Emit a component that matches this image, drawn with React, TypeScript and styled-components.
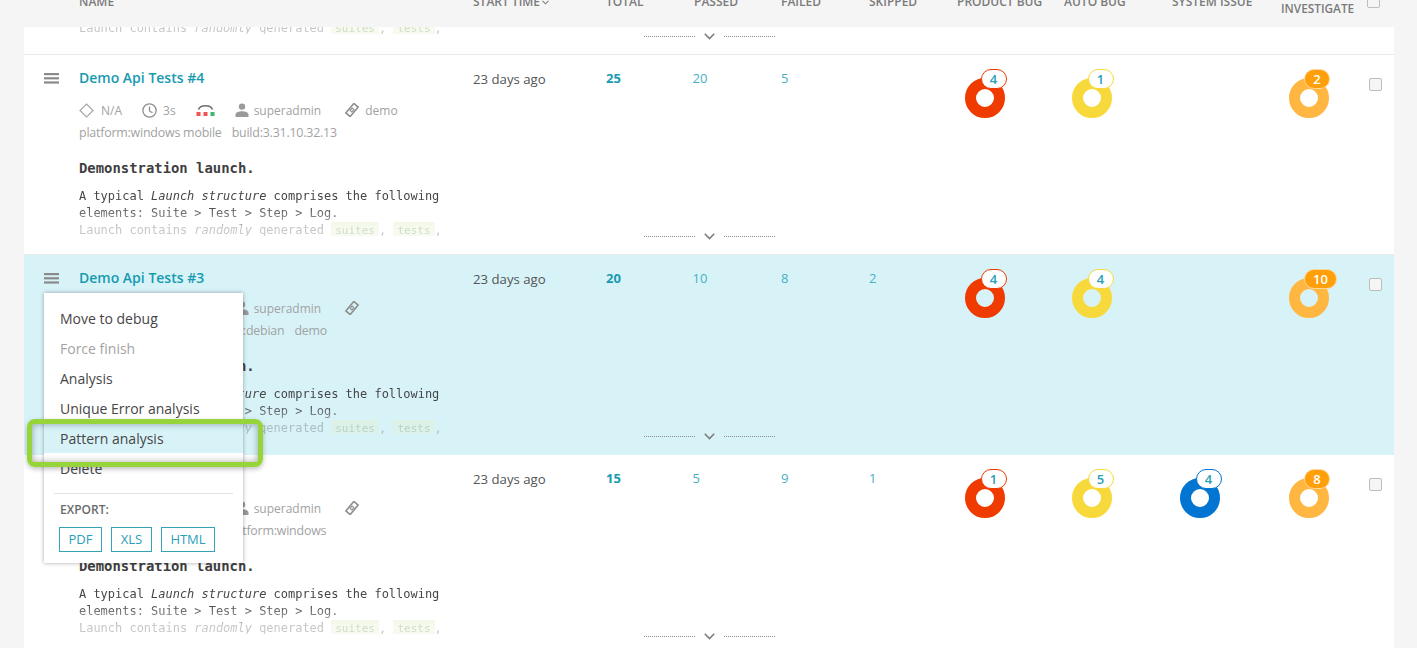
import React from 'react';
import styled, { createGlobalStyle } from 'styled-components';

const GlobalStyle = createGlobalStyle`
  html, body {
    margin: 0;
    padding: 0;
    height: 648px;
    overflow: hidden;
    background: #f5f5f5;
    font-family: "Open Sans", "Liberation Sans", sans-serif;
  }
`;

const columns = '55px 394px 133px 88px 87px 88px 88px 107px 108px 109px 88px 1fr';
const mono = '"DejaVu Sans Mono", "Liberation Mono", monospace';

const Page = styled.div`
  width: 1370px;
  height: 648px;
  margin-left: 24px;
  overflow: hidden;
`;

const Header = styled.div`
  display: grid;
  grid-template-columns: ${columns};
  height: 27px;
  overflow: hidden;
  background: #f5f5f5;
`;

const HeadCell = styled.div<{ $start?: number }>`
  grid-column-start: ${props => props.$start ?? 'auto'};
  margin-top: -6px;
  font-size: 12px;
  line-height: 16px;
  font-weight: 600;
  color: #7b7b7b;
  text-transform: uppercase;
  white-space: nowrap;
  display: flex;
  align-items: center;
  align-self: start;
  gap: 2px;
`;

const HeadTwoLine = styled(HeadCell)`
  display: block;
  margin-top: -11px;
  font-size: 11.8px;
  line-height: 13px;
  text-align: center;
  width: 73px;
`;

const HeadCheck = styled.div`
  margin: -5px 0 0 -2px;
  width: 13px;
  height: 13px;
  box-sizing: border-box;
  border: 1.5px solid #bdbdbd;
  border-radius: 2px;
  background: #f5f5f5;
`;

const TailRow = styled.div`
  display: grid;
  height: 27px;
  background: #fff;
  border-bottom: 1px solid #e9e9e9;
  overflow: hidden;
`;

const TailText = styled.div`
  grid-area: 1 / 1;
  height: 7px;
  overflow: hidden;
  padding-left: 55px;
  opacity: 0.3;
  font-family: ${mono};
  font-size: 11.97px;
  line-height: 17px;
  color: #464547;
  white-space: pre;

  & > div {
    margin-top: -7px;
  }
`;

const TailExpand = styled.div`
  grid-area: 1 / 1;
  align-self: start;
  margin-top: 1px;
`;

const Row = styled.div<{ $active?: boolean }>`
  position: relative;
  z-index: ${props => (props.$active ? 2 : 1)};
  height: 199px;
  display: flex;
  flex-direction: column;
  background: ${props => (props.$active ? '#d8f3f8' : '#fff')};
  border-bottom: 1px solid ${props => (props.$active ? '#d8f3f8' : '#e9e9e9')};
`;

const Cells = styled.div`
  display: grid;
  grid-template-columns: ${columns};
  height: 173px;
`;

const MenuCell = styled.div`
  display: flex;
  align-items: flex-start;
  padding: 18px 0 0 20px;
`;

const NameCell = styled.div`
  padding-top: 13px;
  min-width: 0;
`;

const Title = styled.div`
  font-size: 14px;
  line-height: 20px;
  font-weight: 600;
  color: #179ab0;
  white-space: nowrap;
`;

const Meta = styled.div<{ $tall?: boolean }>`
  display: flex;
  align-items: center;
  height: 20px;
  margin-top: ${props => (props.$tall ? 12 : 10)}px;
  font-size: 12px;
  color: #a2a2a2;
  white-space: nowrap;
`;

const MetaLabel = styled.span<{ $gap: number; $after?: number }>`
  margin-left: ${props => props.$gap}px;
  margin-right: ${props => props.$after ?? 0}px;
`;

const IconSlot = styled.span<{ $after?: number }>`
  display: flex;
  margin-right: ${props => props.$after ?? 0}px;
`;

const Attributes = styled.div`
  display: flex;
  gap: 10px;
  height: 20px;
  margin-top: 3px;
  font-size: 12.4px;
  line-height: 20px;
  letter-spacing: -0.2px;
  color: #a2a2a2;
  white-space: nowrap;
`;

const Heading = styled.div`
  margin-top: 15px;
  font-family: ${mono};
  font-size: 13.9px;
  line-height: 20px;
  font-weight: 700;
  color: #3f3f3f;
`;

const Description = styled.div`
  margin-top: 10px;
  height: 48px;
  overflow: hidden;
  font-family: ${mono};
  font-size: 11.97px;
  line-height: 17px;
  color: #464547;
  white-space: pre;
  -webkit-mask-image: linear-gradient(to bottom, #000 0, #000 18px, rgba(0, 0, 0, 0.3) 40px, rgba(0, 0, 0, 0.3) 48px);
  mask-image: linear-gradient(to bottom, #000 0, #000 18px, rgba(0, 0, 0, 0.3) 40px, rgba(0, 0, 0, 0.3) 48px);
`;

const Chip = styled.span`
  display: inline-block;
  padding: 0 4px;
  font-size: 11px;
  line-height: 17px;
  background: #e4f0cc;
  border-radius: 2px;
  color: #5f8f3f;
`;

const DateCell = styled.div`
  padding-top: 14px;
  font-size: 13.2px;
  line-height: 20px;
  color: #555;
`;

const Count = styled.div<{ $strong?: boolean; $nudge?: number }>`
  margin-left: ${props => props.$nudge ?? 0}px;
  padding-top: 13px;
  font-size: 13px;
  line-height: 20px;
  font-weight: ${props => (props.$strong ? 700 : 400)};
  color: ${props => (props.$strong ? '#179ab0' : '#46b0c4')};
`;

const DefectCell = styled.div`
  padding: 23px 0 0 7.5px;
`;

const Donut = styled.div<{ $color: string }>`
  position: relative;
  box-sizing: border-box;
  width: 40px;
  height: 40px;
  border: 11.5px solid ${props => props.$color};
  border-radius: 50%;
`;

const Badge = styled.span<{ $color: string; $solid?: boolean; $wide?: boolean }>`
  position: absolute;
  top: -20.5px;
  left: ${props => (props.$solid ? '4.5px' : '5px')};
  box-sizing: border-box;
  min-width: ${props => (props.$wide ? '33px' : '26px')};
  height: 20px;
  border-radius: 10px;
  text-align: center;
  font-size: 13px;
  line-height: 18px;
  font-weight: 600;
  border: 1px solid ${props => (props.$solid ? '#ffd79c' : props.$color)};
  background: ${props => (props.$solid ? '#ff9f0a' : '#fff')};
  color: ${props => (props.$solid ? '#fff' : '#2a9fb8')};
`;

const RowCheck = styled.div`
  margin-top: 23px;
  width: 13px;
  height: 13px;
  box-sizing: border-box;
  border: 1.5px solid #bdbdbd;
  border-radius: 2px;
  background: #f5f5f5;
`;

const Expand = styled.div`
  display: flex;
  align-items: center;
  justify-content: center;
  gap: 9px;
  height: 16px;
`;

const Dots = styled.span`
  width: 51px;
  border-top: 1px dotted #8d8d8d;
`;

const Menu = styled.div`
  position: absolute;
  top: 38px;
  left: 20px;
  z-index: 3;
  box-sizing: border-box;
  width: 199px;
  height: 270px;
  padding-top: 10px;
  background: #fff;
  box-shadow: 0 0 4px rgba(0, 0, 0, 0.35);
`;

const MenuItem = styled.div<{ $disabled?: boolean; $active?: boolean }>`
  height: 30px;
  padding-left: 16px;
  font-size: 14px;
  line-height: 31px;
  color: ${props => (props.$disabled ? '#a3a3a3' : '#464547')};
  background: ${props => (props.$active ? '#d8f3f8' : 'transparent')};
`;

const MenuDivider = styled.div`
  height: 1px;
  margin: 10px 10px 0;
  background: #e3e3e3;
`;

const ExportLabel = styled.div`
  margin: 9px 0 0 16px;
  font-size: 12px;
  line-height: 14px;
  font-weight: 600;
  color: #6a6a6a;
`;

const ExportButtons = styled.div`
  display: flex;
  gap: 9px;
  margin: 10px 0 0 15px;
`;

const ExportButton = styled.div<{ $width: number }>`
  box-sizing: border-box;
  width: ${props => props.$width}px;
  height: 25px;
  border: 1px solid #36a3b8;
  font-size: 13px;
  line-height: 23px;
  text-align: center;
  color: #2aa0b8;
`;

const Callout = styled.div`
  position: absolute;
  top: 126px;
  left: -17px;
  box-sizing: border-box;
  width: 236px;
  height: 48px;
  border: 5px solid #97d43a;
  border-radius: 8px;
  box-shadow: 0 2px 5px rgba(0, 0, 0, 0.25), inset 0 0 7px rgba(0, 0, 0, 0.35);
`;

const MenuIcon = () => (
  <svg width="15" height="11" viewBox="0 0 15 11" fill="#8a8a8a">
    <rect y="0" width="15" height="2.2" />
    <rect y="4.2" width="15" height="2.2" />
    <rect y="8.4" width="15" height="2.2" />
  </svg>
);

const DiamondIcon = () => (
  <svg width="15" height="15" viewBox="0 0 15 15" fill="none" stroke="#a8a8a8" strokeWidth="1.2">
    <path d="M7.5 1 14 7.5 7.5 14 1 7.5Z" />
  </svg>
);

const ClockIcon = () => (
  <svg width="15" height="15" viewBox="0 0 15 15" fill="none" stroke="#8f8f8f" strokeWidth="1.3">
    <circle cx="7.5" cy="7.5" r="6.6" />
    <path d="M7.5 3.6V8l3 1.8" />
  </svg>
);

const StatusIcon = () => (
  <svg width="19" height="14" viewBox="0 0 19 14">
    <path d="M2.5 6.5C4.5 1.5 14.5 1.5 16.5 6.5" fill="none" stroke="#6f6f6f" strokeWidth="1.7" />
    <rect x="0.5" y="9" width="4" height="4" fill="#f25252" />
    <rect x="7.5" y="9" width="4" height="4" fill="#f25252" />
    <rect x="14.5" y="9" width="4" height="4" fill="#3fb56f" />
  </svg>
);

const PersonIcon = () => (
  <svg width="14" height="14" viewBox="0 0 14 14" fill="#9a9a9a">
    <circle cx="7" cy="3.6" r="3.2" />
    <path d="M0.5 14V11.6C0.5 9.4 4 8.2 7 8.2s6.5 1.2 6.5 3.4V14Z" />
  </svg>
);

const TagIcon = () => (
  <svg width="14" height="14" viewBox="0 0 14 14" fill="none" stroke="#8c8c8c">
    <g transform="rotate(-50 7 7)">
      <rect x="0.8" y="4.2" width="12.4" height="5.6" strokeWidth="1.6" />
      <rect x="5.4" y="5.9" width="3.2" height="2.2" strokeWidth="1" />
    </g>
  </svg>
);

const ChevronIcon = ({ size = 11 }: { size?: number }) => (
  <svg width={size} height={Math.round(size * 0.65)} viewBox="0 0 11 7" fill="none" stroke="#7d7d7d" strokeWidth="1.6">
    <path d="M0.8 0.8 5.5 5.5 10.2 0.8" />
  </svg>
);

const Expander = () => (
  <Expand>
    <Dots />
    <ChevronIcon />
    <Dots />
  </Expand>
);

const Descr = () => (
  <>
    {'A typical '}
    <i>Launch structure</i>
    {' comprises the following\nelements: Suite > Test > Step > Log.\nLaunch contains '}
    <i>randomly</i>
    {' generated '}
    <Chip>suites</Chip>
    {', '}
    <Chip>tests</Chip>
    {','}
  </>
);

interface Defect {
  value: number;
  color: string;
  solid?: boolean;
}

interface LaunchRow {
  title: string;
  total: number;
  passed: number;
  failed: number;
  skipped?: number;
  tagInline?: boolean;
  attributes: string[];
  defects: (Defect | null)[];
}

const RED = '#ef3a00';
const YELLOW = '#f8d93b';
const BLUE = '#0274d1';
const ORANGE = '#ffb742';

const rows: LaunchRow[] = [
  {
    title: 'Demo Api Tests #4',
    total: 25,
    passed: 20,
    failed: 5,
    tagInline: true,
    attributes: ['platform:windows mobile', 'build:3.31.10.32.13'],
    defects: [
      { value: 4, color: RED },
      { value: 1, color: YELLOW },
      null,
      { value: 2, color: ORANGE, solid: true },
    ],
  },
  {
    title: 'Demo Api Tests #3',
    total: 20,
    passed: 10,
    failed: 8,
    skipped: 2,
    attributes: ['build:3.31.10.32.13', 'platform:debian', 'demo'],
    defects: [
      { value: 4, color: RED },
      { value: 4, color: YELLOW },
      null,
      { value: 10, color: ORANGE, solid: true },
    ],
  },
  {
    title: 'Demo Api Tests #2',
    total: 15,
    passed: 5,
    failed: 9,
    skipped: 1,
    attributes: ['test', 'build:3.31.10.32.13', 'platform:windows'],
    defects: [
      { value: 1, color: RED },
      { value: 5, color: YELLOW },
      { value: 4, color: BLUE },
      { value: 8, color: ORANGE, solid: true },
    ],
  },
];

const menuItems = ['Move to debug', 'Force finish', 'Analysis', 'Unique Error analysis', 'Pattern analysis', 'Delete'];
const exportFormats = [
  { label: 'PDF', width: 43 },
  { label: 'XLS', width: 41 },
  { label: 'HTML', width: 54 },
];

export default function App() {
  return (
    <Page>
      <GlobalStyle />
      <Header>
        <HeadCell $start={2}>Name</HeadCell>
        <HeadCell>
          Start time <ChevronIcon size={7} />
        </HeadCell>
        <HeadCell>Total</HeadCell>
        <HeadCell>Passed</HeadCell>
        <HeadCell>Failed</HeadCell>
        <HeadCell>Skipped</HeadCell>
        <HeadCell>Product bug</HeadCell>
        <HeadCell>Auto bug</HeadCell>
        <HeadCell>System issue</HeadCell>
        <HeadTwoLine>
          To
          <br />
          Investigate
        </HeadTwoLine>
        <HeadCheck />
      </Header>
      <TailRow>
        <TailText>
          <div>
            {'Launch contains '}
            <i>randomly</i>
            {' generated '}
            <Chip>suites</Chip>
            {', '}
            <Chip>tests</Chip>
            {','}
          </div>
        </TailText>
        <TailExpand>
          <Expander />
        </TailExpand>
      </TailRow>
      {rows.map((row, index) => (
        <Row key={row.title} $active={index === 1}>
          <Cells>
            <MenuCell>
              <MenuIcon />
            </MenuCell>
            <NameCell>
              <Title>{row.title}</Title>
              <Meta $tall={row.tagInline}>
                <DiamondIcon />
                <MetaLabel $gap={7} $after={20}>
                  N/A
                </MetaLabel>
                <ClockIcon />
                <MetaLabel $gap={6} $after={20}>
                  3s
                </MetaLabel>
                <IconSlot $after={20}>
                  <StatusIcon />
                </IconSlot>
                <PersonIcon />
                <MetaLabel $gap={5} $after={24}>
                  superadmin
                </MetaLabel>
                <TagIcon />
                {row.tagInline && <MetaLabel $gap={6}>demo</MetaLabel>}
              </Meta>
              <Attributes>
                {row.attributes.map(attribute => (
                  <span key={attribute}>{attribute}</span>
                ))}
              </Attributes>
              <Heading>Demonstration launch.</Heading>
              <Description>
                <Descr />
              </Description>
            </NameCell>
            <DateCell>23 days ago</DateCell>
            <Count $strong>{row.total}</Count>
            <Count $nudge={-1.5}>{row.passed}</Count>
            <Count>{row.failed}</Count>
            <Count>{row.skipped}</Count>
            {row.defects.map((defect, i) => (
              <DefectCell key={i}>
                {defect && (
                  <Donut $color={defect.color}>
                    <Badge $color={defect.color} $solid={defect.solid} $wide={defect.value > 9}>
                      {defect.value}
                    </Badge>
                  </Donut>
                )}
              </DefectCell>
            ))}
            <RowCheck />
          </Cells>
          <Expander />
          {index === 1 && (
            <Menu>
              {menuItems.map(item => (
                <MenuItem key={item} $disabled={item === 'Force finish'} $active={item === 'Pattern analysis'}>
                  {item}
                </MenuItem>
              ))}
              <MenuDivider />
              <ExportLabel>EXPORT:</ExportLabel>
              <ExportButtons>
                {exportFormats.map(format => (
                  <ExportButton key={format.label} $width={format.width}>
                    {format.label}
                  </ExportButton>
                ))}
              </ExportButtons>
              <Callout />
            </Menu>
          )}
        </Row>
      ))}
    </Page>
  );
}
